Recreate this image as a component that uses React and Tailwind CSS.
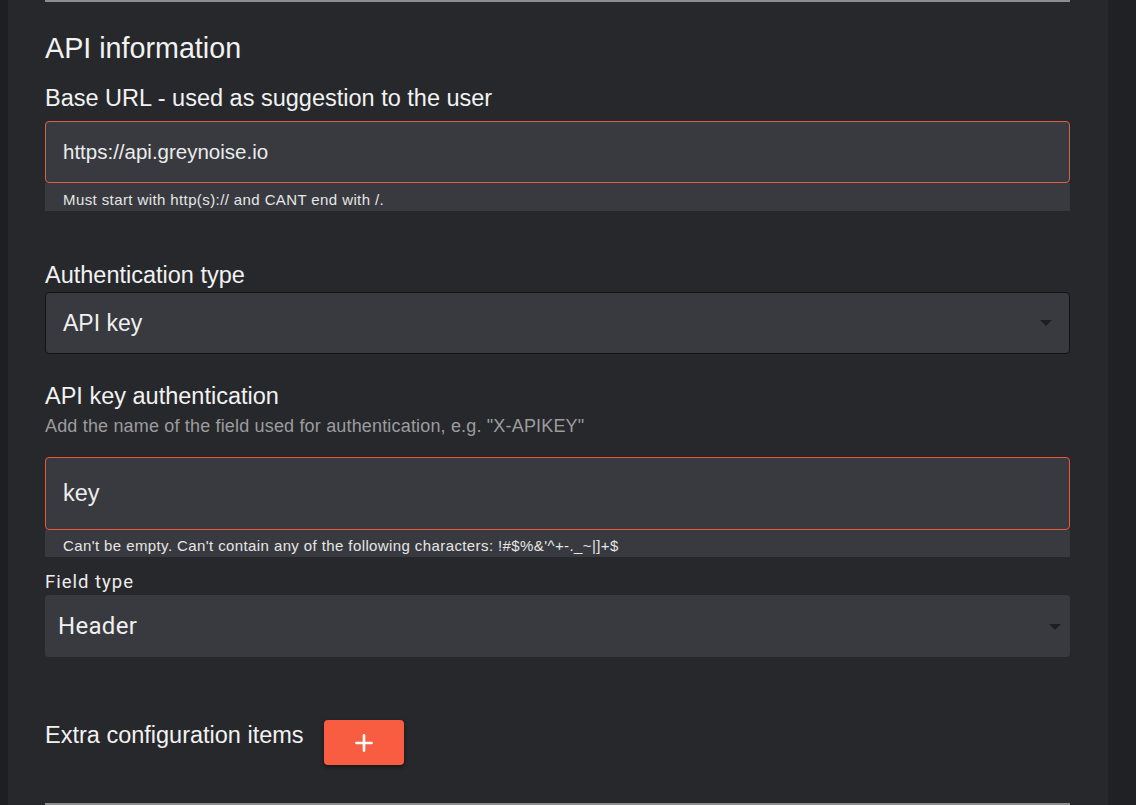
import { Plus } from "lucide-react";

const SANS = "font-['Liberation_Sans',Arial,sans-serif]";
const ROBOTO = "font-['Roboto','Liberation_Sans',sans-serif]";

function Caret({ className }) {
  return (
    <svg width="12" height="6" viewBox="0 0 12 6" className={className}>
      <path d="M0 0h12L6 6z" fill="#1d1e21" />
    </svg>
  );
}

function Label({ children, className = "" }) {
  return (
    <div className={`text-[23.5px] leading-[28px] text-[#f2f2f2] ${className}`}>
      {children}
    </div>
  );
}

function TextField({ value, helper, borderClass, heightClass, helperClass }) {
  return (
    <div>
      <div
        className={`flex items-center rounded-[4px] border bg-[#383a3f] pl-[17px] text-[#ececec] ${borderClass} ${heightClass}`}
      >
        {value}
      </div>
      <div
        className={`bg-[#383a3f] pl-[18px] text-[15px] leading-[17px] tracking-[0.4px] text-[#e6e6e6] ${helperClass}`}
      >
        {helper}
      </div>
    </div>
  );
}

export default function App() {
  return (
    <div className={`flex h-[805px] w-full overflow-hidden bg-[#202124] ${SANS}`}>
      <div className="w-[8px] shrink-0 bg-[#1e1f22]" />
      <div className="w-[1100px] shrink-0 bg-[#27282c] pl-[37px]">
        <div className="w-[1025px]">
          <div className="h-[2px] bg-[#8d8d8d]" />

          <h2 className="mt-[30px] text-[28.7px] leading-[32px] text-[#f2f2f2]">API information</h2>

          <Label className="mt-[20px]">Base URL - used as suggestion to the user</Label>
          <div className="mt-[9px]">
            <TextField
              value={<span className="text-[20.5px]">https://api.greynoise.io</span>}
              helper="Must start with http(s):// and CANT end with /."
              borderClass="border-[#dc5f48]"
              heightClass="h-[62px]"
              helperClass="h-[28px] pt-[8px]"
            />
          </div>

          <Label className="mt-[50px]">Authentication type</Label>
          <div className="mt-[3px] flex h-[62px] items-center justify-between rounded-[4px] border border-[#111214] bg-[#383a3f] pl-[17px] pr-[17px]">
            <span className="text-[23px] text-[#f0f0f0]">API key</span>
            <Caret />
          </div>

          <Label className="mt-[28px]">API key authentication</Label>
          <div className="mt-[5px] text-[18px] leading-[22px] tracking-[0.17px] text-[#9c9c9e]">
            Add the name of the field used for authentication, e.g. "X-APIKEY"
          </div>

          <div className="mt-[20px]">
            <TextField
              value={<span className="text-[23.5px]">key</span>}
              helper="Can't be empty. Can't contain any of the following characters: !#$%&'^+-._~|]+$"
              borderClass="border-[#ee553a]"
              heightClass="h-[73px]"
              helperClass="h-[27px] pt-[7px]"
            />
          </div>

          <div className={`mt-[14px] text-[18.5px] leading-[22px] tracking-[1px] text-[#ececec] ${ROBOTO}`}>
            Field type
          </div>
          <div className="mt-[2px] flex h-[62px] items-center justify-between rounded-[4px] bg-[#383a3f] pl-[13px] pr-[9px]">
            <span className={`text-[24px] tracking-[0.3px] text-[#f0f0f0] ${ROBOTO}`}>Header</span>
            <Caret className="mt-[2px]" />
          </div>

          <div className="mt-[63px] flex items-start">
            <Label className="mt-[1px]">Extra configuration items</Label>
            <button className="ml-[20px] flex h-[45px] w-[80px] items-center justify-center rounded-[4px] bg-[#f95d41] shadow-[0_2px_4px_rgba(0,0,0,0.45)]">
              <Plus size={26} strokeWidth={2.4} className="text-white" />
            </button>
          </div>

          <div className="mt-[38px] h-[2px] bg-[#8d8d8d]" />
        </div>
      </div>
      <div className="flex-1 bg-[#202124]" />
    </div>
  );
}
